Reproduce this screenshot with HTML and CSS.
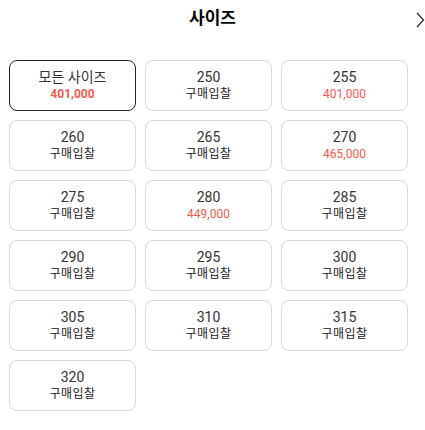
FILE: index.html
```html
<!DOCTYPE html>
<html lang="ko">
<head>
    <meta charset="UTF-8">
    <meta name="viewport" content="width=device-width, initial-scale=1.0">
    <title>사이즈</title>
    <link rel="stylesheet" href="styles.css">
</head>
<body>
    <div class="size-panel">
        <div class="panel-header">
            <h2>사이즈</h2>
            <svg class="next-icon" width="9" height="16" viewBox="0 0 9 16">
                <path d="M1 1 L7.5 8 L1 15" fill="none" stroke="#222" stroke-width="1.2"/>
            </svg>
        </div>
        <div class="size-grid">
            <button class="size-item selected">
                <span class="size-name">모든 사이즈</span>
                <span class="size-price bold">401,000</span>
            </button>
            <button class="size-item"><span class="size-name">250</span><span class="size-bid">구매입찰</span></button>
            <button class="size-item"><span class="size-name">255</span><span class="size-price">401,000</span></button>
            <button class="size-item"><span class="size-name">260</span><span class="size-bid">구매입찰</span></button>
            <button class="size-item"><span class="size-name">265</span><span class="size-bid">구매입찰</span></button>
            <button class="size-item"><span class="size-name">270</span><span class="size-price">465,000</span></button>
            <button class="size-item"><span class="size-name">275</span><span class="size-bid">구매입찰</span></button>
            <button class="size-item"><span class="size-name">280</span><span class="size-price">449,000</span></button>
            <button class="size-item"><span class="size-name">285</span><span class="size-bid">구매입찰</span></button>
            <button class="size-item"><span class="size-name">290</span><span class="size-bid">구매입찰</span></button>
            <button class="size-item"><span class="size-name">295</span><span class="size-bid">구매입찰</span></button>
            <button class="size-item"><span class="size-name">300</span><span class="size-bid">구매입찰</span></button>
            <button class="size-item"><span class="size-name">305</span><span class="size-bid">구매입찰</span></button>
            <button class="size-item"><span class="size-name">310</span><span class="size-bid">구매입찰</span></button>
            <button class="size-item"><span class="size-name">315</span><span class="size-bid">구매입찰</span></button>
            <button class="size-item"><span class="size-name">320</span><span class="size-bid">구매입찰</span></button>
        </div>
    </div>
</body>
</html>
```

FILE: styles.css
```css
body {
    margin: 0;
    padding: 0;
    background-color: #fff;
    font-family: Roboto, "Noto Sans CJK KR", sans-serif;
    color: #222;
}

.size-panel {
    width: 425px;
}

.panel-header {
    position: relative;
    height: 36px;
    display: flex;
    align-items: center;
    justify-content: center;
}

.panel-header h2 {
    margin: 0;
    font-size: 17px;
    font-weight: 700;
    color: #000;
    line-height: 36px;
}

.next-icon {
    position: absolute;
    right: 0;
    top: 12px;
}

.size-grid {
    display: grid;
    grid-template-columns: repeat(3, 127px);
    grid-auto-rows: 51px;
    gap: 9px;
    padding: 24px 0 0 9px;
}

.size-item {
    display: flex;
    flex-direction: column;
    align-items: center;
    justify-content: center;
    background-color: #fff;
    border: 1px solid #d9d9d9;
    border-radius: 8px;
    padding: 0;
    font-family: inherit;
    cursor: pointer;
}

.size-item.selected {
    border-color: #222;
}

.size-name {
    font-size: 14px;
    line-height: 17px;
    color: #333;
}

.size-bid {
    font-size: 12px;
    line-height: 17px;
    letter-spacing: 0.5px;
    color: #222;
}

.size-price {
    font-size: 12px;
    line-height: 17px;
    color: #f45b4c;
}

.size-price.bold {
    font-weight: 700;
}
```
